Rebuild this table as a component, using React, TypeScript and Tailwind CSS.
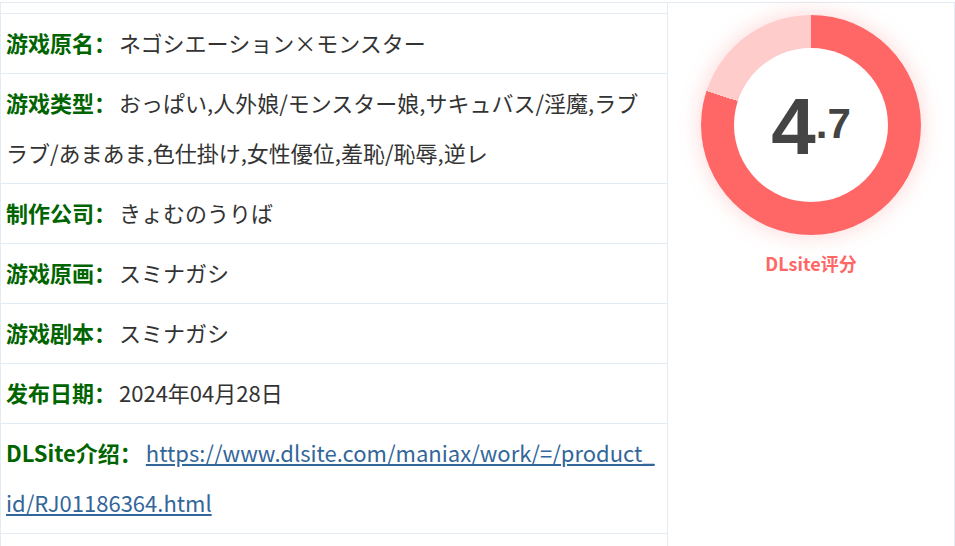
import React from "react";

interface InfoRow {
  label: string;
  value: string;
  href?: string;
}

const rows: InfoRow[] = [
  { label: "游戏原名：", value: "ネゴシエーション×モンスター" },
  {
    label: "游戏类型：",
    value:
      "おっぱい,人外娘/モンスター娘,サキュバス/淫魔,ラブラブ/あまあま,色仕掛け,女性優位,羞恥/恥辱,逆レ",
  },
  { label: "制作公司：", value: "きょむのうりば" },
  { label: "游戏原画：", value: "スミナガシ" },
  { label: "游戏剧本：", value: "スミナガシ" },
  { label: "发布日期：", value: "2024年04月28日" },
  {
    label: "DLSite介绍：",
    value: "https://www.dlsite.com/maniax/work/=/product_id/RJ01186364.html",
    href: "https://www.dlsite.com/maniax/work/=/product_id/RJ01186364.html",
  },
];

const ScoreRing: React.FC<{ score: number }> = ({ score }) => {
  const [whole, frac] = score.toFixed(1).split(".");
  return (
    <div className="flex flex-col items-center pt-[12px]">
      <div className="w-[220px] h-[220px] rounded-full flex items-center justify-center bg-[conic-gradient(#ff6666_0deg_288deg,#ffcccc_288deg_360deg)] shadow-[0_0_22px_rgba(255,102,102,0.28)]">
        <div className="w-[154px] h-[154px] rounded-full bg-white flex items-center justify-center font-['Liberation_Sans',Arial,sans-serif] font-bold text-[#444]">
          <span className="text-[80px] leading-none mt-[4px]">{whole}</span>
          <span className="text-[42px] leading-none self-center mt-[-2px]">.{frac}</span>
        </div>
      </div>
      <p className="mt-[16px] text-[18px] leading-[24px] font-bold text-[#ff6666]">
        DLsite评分
      </p>
    </div>
  );
};

export default function App() {
  return (
    <div className="w-[955px] h-[546px] overflow-hidden bg-white font-['Noto_Sans_CJK_SC','Noto_Sans',sans-serif]">
      <div className="mt-[2px] flex border-t border-l border-r border-[#e3ecf4]">
        <div className="w-[667px] border-r border-[#e3ecf4]">
          <div className="h-[11px] border-b border-[#e3ecf4]" />
          {rows.map((row) => (
            <div
              key={row.label}
              className="pl-[5px] pr-[12px] pt-[3px] pb-[6px] leading-[50px] text-[22px] text-[#333] break-all border-b border-[#e3ecf4]"
            >
              <span className="font-bold text-[#006400]">{row.label}</span>
              {row.href ? (
                <a href={row.href} className="ml-[4px] text-[#336699] underline">
                  {row.value}
                </a>
              ) : (
                <span className="ml-[3px]">{row.value}</span>
              )}
            </div>
          ))}
          <div className="h-[60px]" />
        </div>
        <div className="flex-1">
          <ScoreRing score={4.7} />
        </div>
      </div>
    </div>
  );
}
